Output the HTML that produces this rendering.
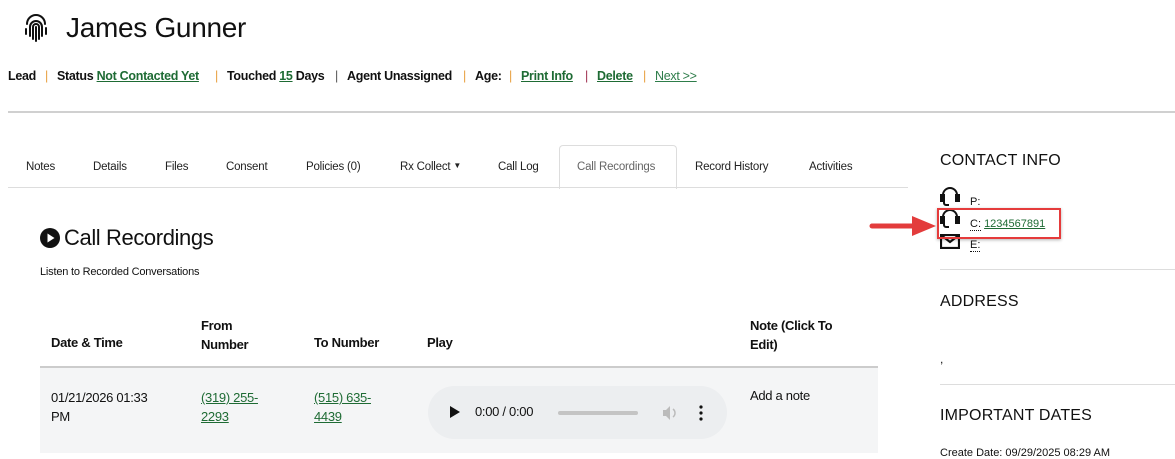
<!DOCTYPE html>
<html><head><style>
body{margin:0;width:1175px;height:453px;overflow:hidden;background:#fff;font-family:"Liberation Sans",sans-serif;color:#111;position:relative}
.a{position:absolute;white-space:nowrap}
.m{font-size:12.5px;font-weight:bold;top:69px;letter-spacing:-0.3px}
.g{color:#1e6b34;text-decoration:underline}
.s{color:#e8a040;font-weight:normal}
.t{font-size:11.5px;top:161px;color:#222;letter-spacing:-0.2px}
.h{font-size:13px;font-weight:bold;letter-spacing:-0.3px}
.r{font-size:13px;letter-spacing:-0.3px}
.hd{font-size:16px;letter-spacing:0.2px;color:#111}
</style></head><body>
<svg class="a" style="left:24px;top:14px" width="24" height="28" viewBox="0 0 24 28" fill="none" stroke="#111" stroke-width="2" stroke-linecap="round">
<path d="M3 10a9 9 0 0 1 18 0"/><path d="M6 22v-9a6 6 0 0 1 12 0v9"/><path d="M9 25V13a3 3 0 0 1 6 0v12"/><path d="M12 13v14"/><path d="M2 15v5M22 14v6"/></svg>
<div class="a" style="left:66px;top:12px;font-size:28px;letter-spacing:-0.3px">James Gunner</div>

<span class="a m" style="left:8px">Lead</span><span class="a m s" style="left:45px">|</span>
<span class="a m" style="left:57px">Status <span class="g">Not Contacted Yet</span></span><span class="a m s" style="left:215px">|</span>
<span class="a m" style="left:227px">Touched <span class="g">15</span> Days</span><span class="a m s" style="left:335px;color:#555">|</span>
<span class="a m" style="left:347px">Agent Unassigned</span><span class="a m s" style="left:463px">|</span>
<span class="a m" style="left:475px">Age:</span><span class="a m s" style="left:509px">|</span>
<span class="a m g" style="left:521px">Print Info</span><span class="a m s" style="left:585px;color:#a03050">|</span>
<span class="a m g" style="left:597px">Delete</span><span class="a m s" style="left:643px">|</span>
<span class="a m g" style="left:655px;font-weight:normal;color:#2e7d4a">Next &gt;&gt;</span>

<div class="a" style="left:8px;top:111px;width:1167px;height:2px;background:#d0d0d0"></div>

<div class="a" style="left:559px;top:145px;width:116px;height:43px;border:1px solid #ddd;border-bottom:none;border-radius:4px 4px 0 0;background:#fff"></div>
<div class="a" style="left:8px;top:187px;width:900px;height:1px;background:#ddd"></div>
<span class="a t" style="left:26px">Notes</span>
<span class="a t" style="left:93px">Details</span>
<span class="a t" style="left:165px">Files</span>
<span class="a t" style="left:226px">Consent</span>
<span class="a t" style="left:306px">Policies (0)</span>
<span class="a t" style="left:400px">Rx Collect <span style="font-size:8px;vertical-align:2px">▼</span></span>
<span class="a t" style="left:498px">Call Log</span>
<span class="a t" style="left:577px;color:#666">Call Recordings</span>
<span class="a t" style="left:695px">Record History</span>
<span class="a t" style="left:809px">Activities</span>

<svg class="a" style="left:40px;top:228px" width="20" height="20" viewBox="0 0 20 20"><circle cx="10" cy="10" r="10" fill="#111"/><path d="M7.5 5.5L14.5 10L7.5 14.5Z" fill="#fff"/></svg>
<div class="a" style="left:64px;top:225px;font-size:22px;letter-spacing:-0.4px">Call Recordings</div>
<div class="a" style="left:40px;top:266px;font-size:11px;letter-spacing:-0.2px">Listen to Recorded Conversations</div>

<span class="a h" style="left:51px;top:335px">Date &amp; Time</span>
<span class="a h" style="left:201px;top:316px;line-height:19px">From<br>Number</span>
<span class="a h" style="left:314px;top:335px">To Number</span>
<span class="a h" style="left:427px;top:335px">Play</span>
<span class="a h" style="left:750px;top:316px;line-height:19px">Note (Click To<br>Edit)</span>
<div class="a" style="left:40px;top:366px;width:838px;height:2px;background:#ccc"></div>
<div class="a" style="left:40px;top:368px;width:838px;height:85px;background:#f4f5f6"></div>
<span class="a r" style="left:51px;top:388px;line-height:19px">01/21/2026 01:33<br>PM</span>
<span class="a r g" style="left:201px;top:388px;line-height:19px">(319) 255-<br>2293</span>
<span class="a r g" style="left:314px;top:388px;line-height:19px">(515) 635-<br>4439</span>
<span class="a r" style="left:750px;top:388px">Add a note</span>
<div class="a" style="left:428px;top:386px;width:299px;height:53px;border-radius:27px;background:#eceef0"></div>
<svg class="a" style="left:450px;top:406px" width="10" height="12"><path d="M0 0L10 6L0 12Z" fill="#111"/></svg>
<span class="a" style="left:475px;top:404px;font-size:13px;letter-spacing:-0.3px">0:00 / 0:00</span>
<div class="a" style="left:558px;top:411px;width:80px;height:4px;border-radius:2px;background:#c4c4c4"></div>
<svg class="a" style="left:662px;top:405px" width="16" height="16"><path d="M1 5h3l4-4v14l-4-4H1z" fill="#bbb"/><path d="M11 4a5 5 0 0 1 0 8" stroke="#bbb" fill="none" stroke-width="1.5"/></svg>
<svg class="a" style="left:699px;top:405px" width="4" height="16"><circle cx="2" cy="2" r="1.6" fill="#111"/><circle cx="2" cy="8" r="1.6" fill="#111"/><circle cx="2" cy="14" r="1.6" fill="#111"/></svg>

<div class="a hd" style="left:940px;top:152px">CONTACT INFO</div>
<svg class="a" style="left:940px;top:187px" width="20" height="20" viewBox="0 0 20 20" fill="none" stroke="#111" stroke-width="2"><path d="M3 11V8a7 7 0 0 1 14 0v3"/><rect x="1" y="8" width="3" height="6" fill="#111"/><rect x="16" y="8" width="3" height="6" fill="#111"/><path d="M4 14v2a2 2 0 0 0 2 2h3"/></svg>
<svg class="a" style="left:940px;top:209px" width="20" height="20" viewBox="0 0 20 20" fill="none" stroke="#111" stroke-width="2"><path d="M3 11V8a7 7 0 0 1 14 0v3"/><rect x="1" y="8" width="3" height="6" fill="#111"/><rect x="16" y="8" width="3" height="6" fill="#111"/><path d="M4 14v2a2 2 0 0 0 2 2h3"/></svg>
<svg class="a" style="left:940px;top:234px" width="20" height="15" viewBox="0 0 20 15" fill="none" stroke="#111" stroke-width="2.2"><rect x="1" y="1" width="18" height="13"/><path d="M1 1l9 7 9-7"/></svg>
<span class="a" style="left:970px;top:196px;font-size:11px;border-bottom:1px dotted #111">P:</span>
<span class="a" style="left:970px;top:218px;font-size:11px"><span style="border-bottom:1px dotted #111">C:</span> <span class="g">1234567891</span></span>
<span class="a" style="left:970px;top:239px;font-size:11px;border-bottom:1px dotted #111">E:</span>
<div class="a" style="left:937px;top:208px;width:120px;height:27px;border:2px solid #e53b3b;box-shadow:0 1px 3px rgba(0,0,0,.3)"></div>
<svg class="a" style="left:868px;top:214px" width="70" height="24"><path d="M4 12H48" stroke="#e33c3c" stroke-width="5" stroke-linecap="round"/><path d="M44 2L68 12L44 22Z" fill="#e33c3c"/></svg>
<div class="a" style="left:940px;top:269px;width:235px;height:1px;background:#ddd"></div>
<div class="a hd" style="left:940px;top:293px">ADDRESS</div>
<div class="a" style="left:940px;top:352px;font-size:12px">,</div>
<div class="a" style="left:940px;top:384px;width:235px;height:1px;background:#ddd"></div>
<div class="a hd" style="left:940px;top:407px">IMPORTANT DATES</div>
<div class="a" style="left:940px;top:447px;font-size:11px">Create Date: 09/29/2025 08:29 AM</div>
</body></html>
